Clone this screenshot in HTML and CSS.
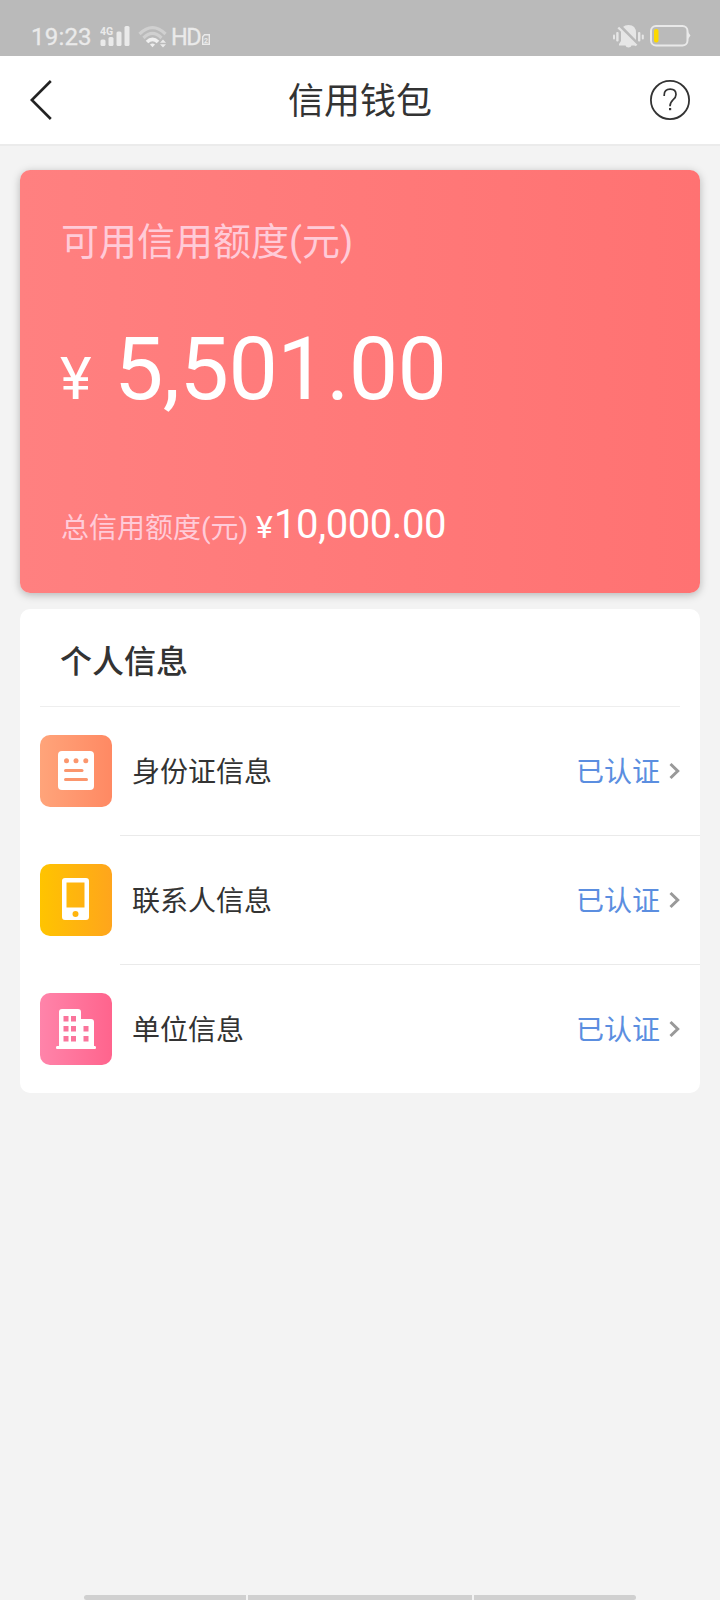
FILE: index.html
```html
<!DOCTYPE html>
<html lang="zh-CN">
<head>
<meta charset="utf-8">
<title>信用钱包</title>
<link rel="stylesheet" href="styles.css">
</head>
<body>
<div class="screen">
  <div class="status">
    <div class="status-left">
      <span class="clock">19:23</span>
      <svg class="signal" width="30" height="22" viewBox="0 0 30 22">
        <text class="net" x="0" y="9.5">4G</text>
        <g fill="#eaeaea"><rect x="0.5" y="14.5" width="5" height="6.5" rx="1.5"/><rect x="8.5" y="12" width="5" height="9" rx="1.5"/><rect x="16.5" y="6.5" width="5" height="14.5" rx="1.5"/><rect x="24.5" y="1" width="5" height="20" rx="1.5"/></g>
      </svg>
      <svg class="wifi" width="30" height="24" viewBox="0 0 30 24">
        <g fill="none" stroke-width="3.2"><path d="M1.5 10Q14.500-3 27.500 10" stroke="#d0d0d0"/><path d="M5.500 14Q14.500 5 23.500 14" stroke="#d0d0d0"/><path d="M9 18Q14.500 12.500 20 18" stroke="#f0f0f0" stroke-width="3.600"/></g>
        <path d="M12 20.500Q14.500 18.500 17 20.500L14.500 23.300Z" fill="#eee"/>
        <path d="M22 18.800L25 15.500L28 18.800ZM22 20.300L25 23.500L28 20.300Z" fill="#eaeaea"/>
      </svg>
      <span class="hd">HD</span>
      <svg class="sim" width="8" height="11" viewBox="0 0 8 11"><path d="M2.500.7H7.300V10.300H.7V2.700Z" fill="none" stroke="#eaeaea" stroke-width="1.400"/><text class="sim-no" x="2" y="8.500">2</text></svg>
    </div>
    <div class="status-right">
      <svg width="31" height="24" viewBox="0 0 31 24">
        <g fill="#e6e6e6"><rect x="0" y="9.500" width="2" height="5" rx="1"/><rect x="3.200" y="7" width="2.400" height="9.500" rx="1"/><rect x="25" y="7" width="2.400" height="9.500" rx="1"/><rect x="28.800" y="9.500" width="2" height="5" rx="1"/>
        <path d="M6 19L8 16V8Q8 0 15.500 0Q23 0 23 8V16L25 19V20.500H18.500Q18 22.500 15.500 22.500Q13 22.500 12.500 20.500H6Z"/></g>
        <path d="M6.500 1L26 21" stroke="#bababa" stroke-width="4"/><path d="M5.300 2.500L23.500 20.500" stroke="#e6e6e6" stroke-width="2.400"/>
      </svg>
      <svg width="41" height="22" viewBox="0 0 41 22"><rect x="1" y="1" width="36.500" height="19.500" rx="5" fill="none" stroke="#e9e9e9" stroke-width="2"/><path d="M38 7L40.500 10.500L38 14Z" fill="#e9e9e9"/><rect x="4" y="4" width="4.500" height="13.500" rx="2" fill="#fcd900"/></svg>
    </div>
  </div>
  <header class="nav">
    <svg class="back" width="24" height="42" viewBox="0 0 24 42"><path d="M20.800 2L1.800 21L20.800 40" fill="none" stroke="#222" stroke-width="2.600"/></svg>
    <h1 class="nav-title">信用钱包</h1>
    <svg class="help" width="40" height="40" viewBox="0 0 40 40" fill="none" stroke="#333"><circle cx="20" cy="20" r="19.100" stroke-width="1.800"/><path d="M14.200 16V15Q14.200 9.200 20.200 9.200Q26 9.200 26 14.500Q26 17.300 23.200 19.600Q20 22.500 20 26.300" stroke-width="1.700"/><rect x="19" y="28" width="2.200" height="2.200" fill="#333" stroke="none"/></svg>
  </header>
  <main class="content">
    <section class="credit">
      <div class="credit-label">可用信用额度(元)</div>
      <div class="credit-amount"><span class="yen">¥</span><span class="value">5,501.00</span></div>
      <div class="credit-total"><span class="total-label">总信用额度(元)</span><span class="total-yen">¥</span><span class="total-value">10,000.00</span></div>
    </section>
    <section class="info">
      <h2 class="info-title">个人信息</h2>
      <div class="row">
        <svg class="icon" width="72" height="72" viewBox="0 0 72 72"><defs><linearGradient id="orange"><stop stop-color="#ffa47a"/><stop offset="1" stop-color="#ff8963"/></linearGradient></defs><rect width="72" height="72" rx="10" fill="url(#orange)"/><rect x="18" y="16" width="36" height="39" rx="4" fill="#fff"/><g fill="#fb966d"><circle cx="26.500" cy="25.700" r="2.500"/><circle cx="36" cy="25.700" r="2.500"/><circle cx="45.800" cy="25.700" r="2.500"/><rect x="24" y="34" width="19.500" height="3" rx="1.500"/><rect x="24" y="43" width="24" height="3" rx="1.500"/></g></svg>
        <div class="row-body"><span class="row-name">身份证信息</span><span class="row-state">已认证</span><svg class="chev" width="11" height="18" viewBox="0 0 11 18"><path d="M1.500 2L8.700 9L1.500 16"/></svg></div>
      </div>
      <div class="row">
        <svg class="icon" width="72" height="72" viewBox="0 0 72 72"><defs><linearGradient id="yellow"><stop stop-color="#ffc400"/><stop offset="1" stop-color="#ffa51c"/></linearGradient></defs><rect width="72" height="72" rx="10" fill="url(#yellow)"/><path fill="#fff" fill-rule="evenodd" d="M25 14H46Q49 14 49 17V53Q49 56 46 56H25Q22 56 22 53V17Q22 14 25 14ZM26.500 18.500V43.500H44.500V18.500ZM35.500 47a3 3 0 1 0 0 6a3 3 0 1 0 0-6Z"/></svg>
        <div class="row-body"><span class="row-name">联系人信息</span><span class="row-state">已认证</span><svg class="chev" width="11" height="18" viewBox="0 0 11 18"><path d="M1.500 2L8.700 9L1.500 16"/></svg></div>
      </div>
      <div class="row">
        <svg class="icon" width="72" height="72" viewBox="0 0 72 72"><defs><linearGradient id="pink"><stop stop-color="#ff84aa"/><stop offset="1" stop-color="#ff648d"/></linearGradient></defs><rect width="72" height="72" rx="10" fill="url(#pink)"/><path fill="#fff" d="M22 16H38Q41 16 41 19V26H51Q54 26 54 29V53H55Q56 53 56 54.500Q56 56 55 56H17Q16 56 16 54.500Q16 53 17 53H19V19Q19 16 22 16Z"/><path fill="#fa749b" d="M23.500 23h5v5.500h-5zM31 23h5v5.500h-5zM23.500 33h5v5.500h-5zM31 33h5v5.500h-5zM43.500 33h5v5.500h-5zM23.500 43h5v5.500h-5zM31 43h5v5.500h-5zM43.500 43h5v5.500h-5z"/></svg>
        <div class="row-body"><span class="row-name">单位信息</span><span class="row-state">已认证</span><svg class="chev" width="11" height="18" viewBox="0 0 11 18"><path d="M1.500 2L8.700 9L1.500 16"/></svg></div>
      </div>
    </section>
  </main>
  <div class="gesture"><i class="side"></i><i class="mid"></i><i class="side"></i></div>
</div>
</body>
</html>
```

FILE: styles.css
```css
* { box-sizing: border-box; }
body { margin: 0; background: #f3f3f3; color: #333; font-family: Roboto, "Noto Sans CJK SC", sans-serif; }
.screen { width: 720px; height: 1600px; display: flex; flex-direction: column; overflow: hidden; }
svg { display: block; flex: none; }

.status { height: 56px; flex: none; background: #bababa; color: #eaeaea; display: flex; justify-content: space-between; padding: 24px 30px 0 30px; }
.status-left, .status-right { display: flex; align-items: flex-start; }
.status-right { gap: 6px; padding-top: 1px; margin-right: -1px; }
.clock { width: 70px; padding-left: 1px; font-size: 24px; line-height: 26px; letter-spacing: 0.2px; -webkit-text-stroke: 0.3px #eaeaea; }
.signal { margin-top: 1px; }
.wifi { margin-left: 8px; }
.hd { margin-left: 3px; width: 30px; font-size: 23.5px; line-height: 26px; letter-spacing: -1.4px; -webkit-text-stroke: 0.3px #eaeaea; }
.sim { margin: 10px 0 0 1px; }
.net { font: bold 10.5px Roboto, sans-serif; fill: #eaeaea; }
.sim-no { font: bold 7px Roboto, sans-serif; fill: #eaeaea; }

.nav { height: 90px; flex: none; background: #fff; border-bottom: 2px solid #ebebeb; display: flex; align-items: center; justify-content: space-between; padding: 0 30px; }
.back { margin-right: 16px; }
.nav-title { margin: 0; padding-top: 4px; font-size: 36px; line-height: 52px; font-weight: 400; }

.content { flex: 1; padding: 24px 20px 0; }
.credit { height: 423px; padding: 44px 40px 0 41px; border-radius: 10px; background: linear-gradient(90deg, #ff8080, #ff7272); box-shadow: 0 2px 8px rgba(0,0,0,.26); color: #fff; white-space: nowrap; }
.credit-label { font-size: 38px; line-height: 56px; color: #ffcbd8; }
.credit-amount { margin-top: 44px; font-size: 88px; line-height: 110px; letter-spacing: -0.6px; display: flex; align-items: baseline; }
.yen { width: 54px; margin-left: -1px; font-size: 60px; }
.credit-total { margin-top: 66px; display: flex; align-items: baseline; line-height: 50px; }
.total-label { width: 195px; font-size: 28px; color: #ffcbd8; }
.total-yen { width: 18px; font-size: 32px; }
.total-value { font-size: 40px; letter-spacing: -0.4px; }

.info { margin-top: 16px; height: 484px; background: #fff; border-radius: 10px; }
.info-title { height: 98px; margin: 0 20px; padding: 27px 20px 0; border-bottom: 1px solid #eee; font-size: 32px; line-height: 52px; font-weight: 500; }
.row { height: 129px; display: flex; align-items: center; padding-left: 20px; gap: 8px; }
.icon { margin-bottom: 2px; }
.row-body { flex: 1; height: 129px; padding: 0 20px 1px 12px; border-bottom: 1px solid #eaeaea; display: flex; align-items: center; font-size: 28px; }
.row:last-child .row-body { border-bottom: 0; padding-bottom: 2px; }
.row-name { flex: 1; }
.row-name, .row-state { padding-bottom: 1px; }
.row-state { color: #5b8ee0; margin-right: 9px; }
.chev { fill: none; stroke: #999; stroke-width: 3; }

.gesture { height: 5px; flex: none; display: flex; justify-content: center; gap: 2px; }
.side, .mid { height: 5px; background: #d0d0d0; }
.side { width: 162px; }
.mid { width: 224px; }
.side:first-child { border-radius: 3px 0 0 3px; }
.side:last-child { border-radius: 0 3px 3px 0; }
```
